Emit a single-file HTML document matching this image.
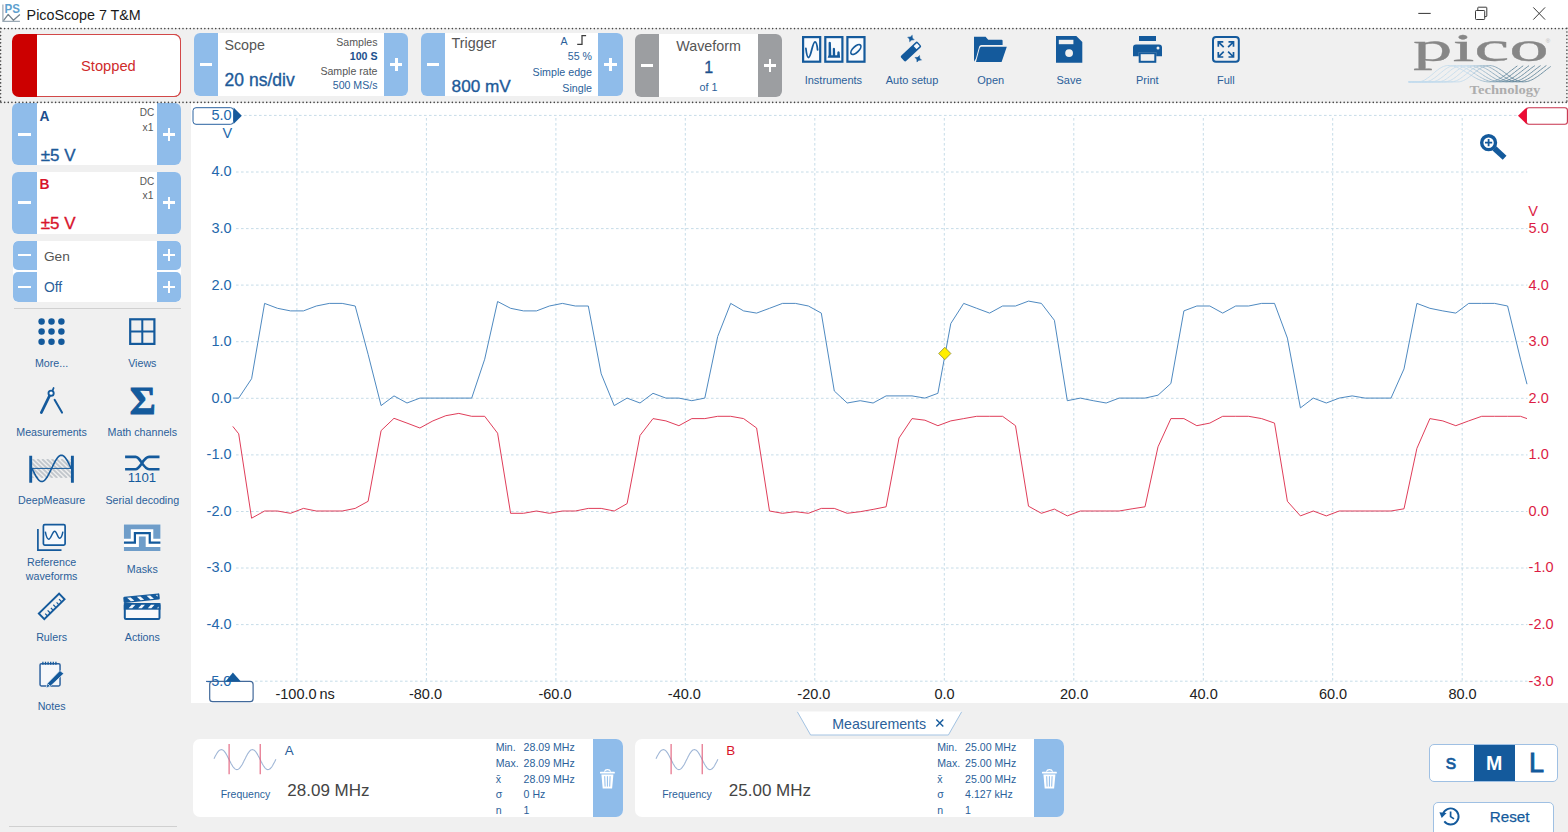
<!DOCTYPE html>
<html lang="en"><head><meta charset="utf-8"><title>PicoScope 7 T&amp;M</title>
<style>
html,body{margin:0;padding:0}
body{width:1568px;height:832px;position:relative;overflow:hidden;background:#f0f0f0;font-family:"Liberation Sans",sans-serif;}
body div,body svg{position:absolute;box-sizing:border-box}
.t{line-height:1;white-space:nowrap}
svg{overflow:visible}
svg text{font-family:"Liberation Sans",sans-serif}
</style></head><body>
<div style="left:0.0px;top:0.0px;width:1568.0px;height:29.0px;background:#fff;"></div>
<svg style="left:0.0px;top:0.0px;" width="24" height="26" viewBox="0 0 24 26"><path d="M2.9 4.6v16.8h17" fill="none" stroke="#9aa9b5" stroke-width="1.2"/><path d="M3.5 20.7l4.7-6.3l5.2 5.9l6.5-5.9" fill="none" stroke="#75848f" stroke-width="1.3" stroke-linejoin="round"/><text x="4.6" y="13.4" font-size="12.2" font-weight="700" fill="#5d9fce" textLength="15.4" lengthAdjust="spacingAndGlyphs">PS</text></svg>
<div class="t" style="left:26.6px;top:8.1px;font-size:14.3px;color:#1a1a1a;">PicoScope 7 T&amp;M</div>
<svg style="left:1410.0px;top:0.0px;" width="158" height="29" viewBox="0 0 158 29"><path d="M8.3 13.4h12.4" stroke="#333" stroke-width="1" fill="none"/><rect x="65.5" y="10.5" width="9.2" height="9" rx="0.8" fill="none" stroke="#3a3a3a" stroke-width="1"/><path d="M67.8 10.3v-2.5a0.6 0.6 0 0 1 0.6-0.6h7.8a0.6 0.6 0 0 1 0.6 0.6v8.2a0.6 0.6 0 0 1-0.6 0.6h-1.3" fill="none" stroke="#3a3a3a" stroke-width="1"/><path d="M123.3 7.4l11.8 12.2M135.1 7.4l-11.8 12.2" stroke="#3a3a3a" stroke-width="1" fill="none"/></svg>
<div style="left:0.0px;top:28.0px;width:1568.0px;height:75.0px;background:#f0f0f0;"></div>
<div style="left:12.3px;top:33.8px;width:169px;height:63.2px;background:#cc0000;border-radius:7px"></div>
<div style="left:37px;top:33.8px;width:144.3px;height:63.2px;background:#fff;border:1.3px solid #d24848;border-left:none;border-radius:0 7px 7px 0"></div>
<div class="t" style="left:108.4px;transform:translateX(-50%);top:59.1px;font-size:14.7px;color:#cf2b2b;">Stopped</div>
<div style="left:193.8px;top:32.7px;width:214.5px;height:63.4px;background:#fff;border-radius:6px;overflow:hidden"><div style="left:0;top:0;width:24.2px;height:100%;background:#8fbcea"></div><div style="right:0;top:0;width:24.2px;height:100%;background:#8fbcea"></div></div>
<div style="left:199.6px;top:63.1px;width:12.6px;height:2.8px;background:#fff;"></div>
<div style="left:389.9px;top:63.1px;width:12.6px;height:2.8px;background:#fff;"></div>
<div style="left:394.8px;top:58.2px;width:2.8px;height:12.6px;background:#fff;"></div>
<div class="t" style="left:224.4px;top:38.0px;font-size:14.3px;color:#555555;">Scope</div>
<div class="t" style="left:224.6px;top:72.1px;font-size:17.5px;color:#1d5a99;-webkit-text-stroke:0.35px #1d5a99;">20 ns/div</div>
<div class="t" style="right:1190.5px;top:37.0px;font-size:10.6px;color:#555555;">Samples</div>
<div class="t" style="right:1190.5px;top:51.0px;font-size:10.6px;color:#1d4f8d;font-weight:700;">100 S</div>
<div class="t" style="right:1190.5px;top:66.0px;font-size:10.6px;color:#555555;">Sample rate</div>
<div class="t" style="right:1190.5px;top:80.0px;font-size:10.6px;color:#2b5f9a;">500 MS/s</div>
<div style="left:421.0px;top:32.7px;width:201.7px;height:63.4px;background:#fff;border-radius:6px;overflow:hidden"><div style="left:0;top:0;width:24.3px;height:100%;background:#8fbcea"></div><div style="right:0;top:0;width:24.3px;height:100%;background:#8fbcea"></div></div>
<div style="left:426.8px;top:63.1px;width:12.6px;height:2.8px;background:#fff;"></div>
<div style="left:604.3px;top:63.1px;width:12.6px;height:2.8px;background:#fff;"></div>
<div style="left:609.2px;top:58.2px;width:2.8px;height:12.6px;background:#fff;"></div>
<div class="t" style="left:451.6px;top:36.0px;font-size:14.3px;color:#555555;">Trigger</div>
<div class="t" style="left:451.6px;top:78.0px;font-size:17.2px;color:#1d5a99;-webkit-text-stroke:0.35px #1d5a99;">800 mV</div>
<div class="t" style="left:560.4px;top:36.0px;font-size:10.6px;color:#2b5f9a;">A</div>
<svg style="left:577.0px;top:35.0px;" width="10" height="10" viewBox="0 0 10 10"><path d="M0.2 9.4h4.8v-8.8h4.1" fill="none" stroke="#3c3c3c" stroke-width="1.25"/></svg>
<div class="t" style="right:976.0px;top:51.0px;font-size:10.6px;color:#2b5f9a;">55 %</div>
<div class="t" style="right:976.0px;top:67.0px;font-size:10.7px;color:#2b5f9a;">Simple edge</div>
<div class="t" style="right:976.0px;top:83.0px;font-size:10.7px;color:#2b5f9a;">Single</div>
<div style="left:635.0px;top:33.7px;width:147.0px;height:63.3px;background:#fff;border-radius:6px;overflow:hidden"><div style="left:0;top:0;width:24.0px;height:100%;background:#9c9ea1"></div><div style="right:0;top:0;width:24.0px;height:100%;background:#9c9ea1"></div></div>
<div style="left:640.7px;top:64.0px;width:12.6px;height:2.8px;background:#fff;"></div>
<div style="left:763.7px;top:64.0px;width:12.6px;height:2.8px;background:#fff;"></div>
<div style="left:768.6px;top:59.1px;width:2.8px;height:12.6px;background:#fff;"></div>
<div class="t" style="left:708.6px;transform:translateX(-50%);top:39.0px;font-size:14.3px;color:#555555;">Waveform</div>
<div class="t" style="left:708.6px;transform:translateX(-50%);top:60.0px;font-size:16px;color:#1d4f8d;-webkit-text-stroke:0.3px #1d4f8d;">1</div>
<div class="t" style="left:708.6px;transform:translateX(-50%);top:82.0px;font-size:10.8px;color:#2b5f9a;">of 1</div>
<div class="t" style="left:833.4px;transform:translateX(-50%);top:75.0px;font-size:11px;color:#2b5f9a;">Instruments</div>
<div class="t" style="left:912.0px;transform:translateX(-50%);top:75.0px;font-size:11px;color:#2b5f9a;">Auto setup</div>
<div class="t" style="left:990.7px;transform:translateX(-50%);top:75.0px;font-size:11px;color:#2b5f9a;">Open</div>
<div class="t" style="left:1069.0px;transform:translateX(-50%);top:75.0px;font-size:11px;color:#2b5f9a;">Save</div>
<div class="t" style="left:1147.3px;transform:translateX(-50%);top:75.0px;font-size:11px;color:#2b5f9a;">Print</div>
<div class="t" style="left:1225.8px;transform:translateX(-50%);top:75.0px;font-size:11px;color:#2b5f9a;">Full</div>
<svg style="left:801.7px;top:36.0px;" width="64" height="27" viewBox="0 0 64 27"><rect x="1.1" y="1.1" width="17.1" height="24.6" fill="#f9fbfe" stroke="#145a9c" stroke-width="2.2"/><rect x="23.3" y="1.1" width="17.1" height="24.6" fill="#f9fbfe" stroke="#145a9c" stroke-width="2.2"/><rect x="45.4" y="1.1" width="17.1" height="24.6" fill="#f9fbfe" stroke="#145a9c" stroke-width="2.2"/><path d="M3.9 12.5C4.5 18 5.5 21.5 6.6 21.5C9 21.5 10.5 5.9 13 5.9C14.5 5.9 15.2 10 15.6 13.9" fill="none" stroke="#145a9c" stroke-width="1.8" stroke-linecap="round"/><path d="M25.7 21.7L26.6 19V6.5Q27.75 4.8 28.9 6.5L29.3 19.3L30.8 19.3V12.5Q31.9 11 33 12.5L33.2 19.3L35.2 19.3L35.4 16Q36.5 14.5 37.6 16L38.1 21.7Z" fill="#145a9c"/><ellipse cx="53.9" cy="13.5" rx="6.4" ry="2.9" transform="rotate(-44 53.9 13.5)" fill="none" stroke="#145a9c" stroke-width="1.7"/></svg>
<svg style="left:900.0px;top:35.3px;" width="23" height="28" viewBox="0 0 23 28"><g transform="rotate(-43 10.95 16.5)"><rect x="-0.45" y="12.8" width="22.8" height="7.4" rx="1.7" fill="#145a9c"/><rect x="16.6" y="14.4" width="4.4" height="4.2" rx="0.5" fill="#f4f8fc"/></g><path d="M0 -3.5Q0.5 -0.5 3.5 0Q0.5 0.5 0 3.5Q-0.5 0.5 -3.5 0Q-0.5 -0.5 0 -3.5Z" fill="#145a9c" stroke="#145a9c" stroke-width="0.5" transform="translate(10.95 3.5) rotate(22)"/><path d="M0 -3.5Q0.5 -0.5 3.5 0Q0.5 0.5 0 3.5Q-0.5 0.5 -3.5 0Q-0.5 -0.5 0 -3.5Z" fill="#145a9c" stroke="#145a9c" stroke-width="0.5" transform="translate(18.25 23.8) rotate(22)"/></svg>
<svg style="left:974.0px;top:36.0px;" width="33" height="27" viewBox="0 0 33 27"><path d="M0 0.8h11.6l2.6 3h13.4a1 1 0 0 1 1 1v4.3h-21.2a2.4 2.4 0 0 0 -2.3 1.7l-3.2 11.8l-1.9 3.2z" fill="#145a9c"/><path d="M7.4 10.7h25.4l-5.2 15.3h-25.6l3.6 -13.6a2.3 2.3 0 0 1 1.8 -1.7z" fill="#145a9c"/></svg>
<svg style="left:1055.7px;top:36.0px;" width="27" height="27" viewBox="0 0 27 27"><path d="M0 0h20.3l6 6v20.8h-26.3z" fill="#145a9c"/><rect x="2.8" y="3.8" width="14.6" height="4.4" fill="#f0f0f0"/><circle cx="13.1" cy="17.1" r="3.9" fill="#f0f0f0"/></svg>
<svg style="left:1132.7px;top:36.0px;" width="29" height="27" viewBox="0 0 29 27"><rect x="6" y="0" width="17" height="5" fill="#145a9c"/><path d="M3 8.6h23a3 3 0 0 1 3 3v8.6h-5.8v-4h-17.4v4h-5.8v-8.6a3 3 0 0 1 3-3z" fill="#145a9c"/><circle cx="25" cy="11.9" r="1.5" fill="#f0f0f0"/><rect x="6.7" y="17.2" width="15.6" height="8.6" fill="none" stroke="#145a9c" stroke-width="2"/></svg>
<svg style="left:1212.0px;top:36.0px;" width="28" height="27" viewBox="0 0 28 27"><rect x="1" y="1" width="25.8" height="24.8" rx="3" fill="none" stroke="#145a9c" stroke-width="2"/><path d="M11.7 11.2L6.300000000000001 5.800000000000001M11.3 5.800000000000001L6.300000000000001 5.800000000000001L6.300000000000001 10.8" fill="none" stroke="#145a9c" stroke-width="1.7"/><path d="M16.1 11.2L21.5 5.800000000000001M16.5 5.800000000000001L21.5 5.800000000000001L21.5 10.8" fill="none" stroke="#145a9c" stroke-width="1.7"/><path d="M11.7 15.600000000000001L6.300000000000001 21.0M11.3 21.0L6.300000000000001 21.0L6.300000000000001 16.0" fill="none" stroke="#145a9c" stroke-width="1.7"/><path d="M16.1 15.600000000000001L21.5 21.0M16.5 21.0L21.5 21.0L21.5 16.0" fill="none" stroke="#145a9c" stroke-width="1.7"/></svg>
<svg style="left:1412.0px;top:28.0px;" width="150" height="70" viewBox="0 0 150 70"><defs><linearGradient id="wg" gradientUnits="userSpaceOnUse" x1="55" y1="0" x2="98" y2="0"><stop offset="0" stop-color="#c3dbec"/><stop offset="1" stop-color="#5b8197"/></linearGradient></defs><polyline points="-3.4,53.9 -1.9,53.9 -0.5,53.9 0.9,53.9 2.4,53.9 3.8,53.9 5.3,53.9 6.8,53.9 8.2,53.7 9.6,53.3 11.1,52.8 12.5,52.1 14.0,51.2 15.4,50.2 16.9,49.2 18.3,48.0 19.8,46.8 21.2,45.6 22.7,44.3 24.1,43.1 25.6,42.0 27.0,40.9 28.5,40.0 29.9,39.2 31.4,38.5 32.8,38.0 34.3,37.7 35.7,37.5 37.2,37.5 38.6,37.6 40.1,37.9 41.6,38.2 43.0,38.6 44.5,39.1 45.9,39.7 47.4,40.4 48.8,41.1 50.3,41.9 51.7,42.7 53.2,43.6 54.6,44.5 56.1,45.4 57.5,46.3 59.0,47.2 60.4,48.1 61.9,49.0 63.3,49.8 64.8,50.6 66.2,51.3 67.7,51.9 69.1,52.5 70.6,52.9 72.0,53.3 73.5,53.6 74.9,53.8 76.4,53.9 77.8,53.9 79.3,53.7 80.7,53.5 82.2,53.1 83.6,52.6 85.1,52.0 86.5,51.3 88.0,50.6 89.4,49.7 90.9,48.7 92.3,47.7 93.8,46.7 95.2,45.6 96.7,44.5 98.1,43.3 99.6,42.2 101.0,41.1 102.5,40.0 103.9,38.9 105.4,37.9" fill="none" stroke="url(#wg)" stroke-width="0.85"/><polyline points="-3.4,53.9 -1.9,53.9 -0.5,53.9 0.9,53.9 2.4,53.9 3.8,53.9 5.3,53.9 6.8,53.9 8.2,53.9 9.6,53.9 11.1,53.9 12.5,53.9 14.0,53.8 15.4,53.5 16.9,53.1 18.3,52.5 19.8,51.7 21.2,50.8 22.7,49.8 24.1,48.7 25.6,47.5 27.0,46.3 28.5,45.1 29.9,43.9 31.4,42.7 32.8,41.6 34.3,40.6 35.7,39.7 37.2,38.9 38.6,38.3 40.1,37.9 41.6,37.6 43.0,37.5 44.5,37.6 45.9,37.7 47.4,38.0 48.8,38.4 50.3,38.8 51.7,39.4 53.2,40.0 54.6,40.7 56.1,41.5 57.5,42.4 59.0,43.2 60.4,44.1 61.9,45.1 63.3,46.0 64.8,47.0 66.2,47.9 67.7,48.8 69.1,49.6 70.6,50.4 72.0,51.2 73.5,51.8 74.9,52.4 76.4,52.9 77.8,53.3 79.3,53.6 80.7,53.8 82.2,53.9 83.6,53.9 85.1,53.7 86.5,53.5 88.0,53.1 89.4,52.6 90.9,52.0 92.3,51.3 93.8,50.5 95.2,49.6 96.7,48.7 98.1,47.7 99.6,46.6 101.0,45.5 102.5,44.4 103.9,43.2 105.4,42.1 106.8,41.0 108.3,39.9 109.7,38.8 111.2,37.8" fill="none" stroke="url(#wg)" stroke-width="0.85"/><polyline points="-3.4,53.9 -1.9,53.9 -0.5,53.9 0.9,53.9 2.4,53.9 3.8,53.9 5.3,53.9 6.8,53.9 8.2,53.9 9.6,53.9 11.1,53.9 12.5,53.9 14.0,53.9 15.4,53.9 16.9,53.9 18.3,53.9 19.8,53.9 21.2,53.7 22.7,53.4 24.1,52.9 25.6,52.2 27.0,51.4 28.5,50.4 29.9,49.4 31.4,48.3 32.8,47.1 34.3,45.9 35.7,44.6 37.2,43.4 38.6,42.3 40.1,41.2 41.6,40.3 43.0,39.4 44.5,38.7 45.9,38.1 47.4,37.8 48.8,37.5 50.3,37.5 51.7,37.6 53.2,37.8 54.6,38.1 56.1,38.6 57.5,39.1 59.0,39.7 60.4,40.4 61.9,41.2 63.3,42.0 64.8,42.9 66.2,43.8 67.7,44.8 69.1,45.7 70.6,46.7 72.0,47.7 73.5,48.6 74.9,49.5 76.4,50.3 77.8,51.1 79.3,51.8 80.7,52.4 82.2,52.9 83.6,53.3 85.1,53.6 86.5,53.8 88.0,53.9 89.4,53.9 90.9,53.7 92.3,53.4 93.8,53.1 95.2,52.6 96.7,52.0 98.1,51.2 99.6,50.5 101.0,49.6 102.5,48.6 103.9,47.6 105.4,46.5 106.8,45.4 108.3,44.3 109.7,43.2 111.2,42.0 112.6,40.9 114.1,39.8 115.5,38.7 117.0,37.7" fill="none" stroke="url(#wg)" stroke-width="0.85"/><polyline points="-3.4,53.9 -1.9,53.9 -0.5,53.9 0.9,53.9 2.4,53.9 3.8,53.9 5.3,53.9 6.8,53.9 8.2,53.9 9.6,53.9 11.1,53.9 12.5,53.9 14.0,53.9 15.4,53.9 16.9,53.9 18.3,53.9 19.8,53.9 21.2,53.9 22.7,53.9 24.1,53.9 25.6,53.9 27.0,53.8 28.5,53.6 29.9,53.2 31.4,52.6 32.8,51.9 34.3,51.0 35.7,50.0 37.2,48.9 38.6,47.8 40.1,46.6 41.6,45.4 43.0,44.2 44.5,43.0 45.9,41.9 47.4,40.9 48.8,39.9 50.3,39.1 51.7,38.5 53.2,38.0 54.6,37.7 56.1,37.5 57.5,37.5 59.0,37.7 60.4,37.9 61.9,38.3 63.3,38.8 64.8,39.4 66.2,40.0 67.7,40.8 69.1,41.6 70.6,42.5 72.0,43.5 73.5,44.4 74.9,45.4 76.4,46.4 77.8,47.4 79.3,48.4 80.7,49.3 82.2,50.1 83.6,51.0 85.1,51.7 86.5,52.3 88.0,52.9 89.4,53.3 90.9,53.6 92.3,53.8 93.8,53.9 95.2,53.9 96.7,53.7 98.1,53.4 99.6,53.0 101.0,52.5 102.5,51.9 103.9,51.2 105.4,50.4 106.8,49.5 108.3,48.6 109.7,47.5 111.2,46.5 112.6,45.4 114.1,44.2 115.5,43.1 117.0,42.0 118.4,40.8 119.9,39.7 121.3,38.7 122.8,37.7" fill="none" stroke="url(#wg)" stroke-width="0.85"/><polyline points="-3.4,53.9 -1.9,53.9 -0.5,53.9 0.9,53.9 2.4,53.9 3.8,53.9 5.3,53.9 6.8,53.9 8.2,53.9 9.6,53.9 11.1,53.9 12.5,53.9 14.0,53.9 15.4,53.9 16.9,53.9 18.3,53.9 19.8,53.9 21.2,53.9 22.7,53.9 24.1,53.9 25.6,53.9 27.0,53.9 28.5,53.9 29.9,53.9 31.4,53.9 32.8,53.9 34.3,53.7 35.7,53.4 37.2,52.9 38.6,52.3 40.1,51.5 41.6,50.6 43.0,49.6 44.5,48.5 45.9,47.3 47.4,46.1 48.8,44.9 50.3,43.7 51.7,42.6 53.2,41.5 54.6,40.5 56.1,39.6 57.5,38.9 59.0,38.3 60.4,37.9 61.9,37.6 63.3,37.5 64.8,37.6 66.2,37.8 67.7,38.1 69.1,38.5 70.6,39.0 72.0,39.7 73.5,40.4 74.9,41.3 76.4,42.1 77.8,43.1 79.3,44.1 80.7,45.1 82.2,46.1 83.6,47.1 85.1,48.1 86.5,49.1 88.0,50.0 89.4,50.8 90.9,51.6 92.3,52.3 93.8,52.8 95.2,53.3 96.7,53.6 98.1,53.8 99.6,53.9 101.0,53.9 102.5,53.7 103.9,53.4 105.4,53.0 106.8,52.5 108.3,51.9 109.7,51.2 111.2,50.3 112.6,49.5 114.1,48.5 115.5,47.5 117.0,46.4 118.4,45.3 119.9,44.2 121.3,43.0 122.8,41.9 124.2,40.8 125.7,39.7 127.1,38.6 128.6,37.6" fill="none" stroke="url(#wg)" stroke-width="0.85"/><polyline points="-3.4,53.9 -1.9,53.9 -0.5,53.9 0.9,53.9 2.4,53.9 3.8,53.9 5.3,53.9 6.8,53.9 8.2,53.9 9.6,53.9 11.1,53.9 12.5,53.9 14.0,53.9 15.4,53.9 16.9,53.9 18.3,53.9 19.8,53.9 21.2,53.9 22.7,53.9 24.1,53.9 25.6,53.9 27.0,53.9 28.5,53.9 29.9,53.9 31.4,53.9 32.8,53.9 34.3,53.9 35.7,53.9 37.2,53.9 38.6,53.9 40.1,53.8 41.6,53.6 43.0,53.2 44.5,52.7 45.9,52.0 47.4,51.2 48.8,50.2 50.3,49.2 51.7,48.0 53.2,46.9 54.6,45.7 56.1,44.5 57.5,43.3 59.0,42.2 60.4,41.1 61.9,40.2 63.3,39.4 64.8,38.7 66.2,38.1 67.7,37.7 69.1,37.5 70.6,37.5 72.0,37.6 73.5,37.9 74.9,38.2 76.4,38.7 77.8,39.3 79.3,40.1 80.7,40.9 82.2,41.8 83.6,42.7 85.1,43.7 86.5,44.8 88.0,45.8 89.4,46.9 90.9,47.9 92.3,48.9 93.8,49.8 95.2,50.7 96.7,51.5 98.1,52.2 99.6,52.8 101.0,53.3 102.5,53.6 103.9,53.8 105.4,53.9 106.8,53.9 108.3,53.7 109.7,53.4 111.2,53.0 112.6,52.5 114.1,51.8 115.5,51.1 117.0,50.3 118.4,49.4 119.9,48.4 121.3,47.4 122.8,46.3 124.2,45.2 125.7,44.1 127.1,42.9 128.6,41.8 130.0,40.7 131.5,39.6 132.9,38.5 134.4,37.5" fill="none" stroke="url(#wg)" stroke-width="0.85"/><polyline points="-3.4,53.9 -1.9,53.9 -0.5,53.9 0.9,53.9 2.4,53.9 3.8,53.9 5.3,53.9 6.8,53.9 8.2,53.9 9.6,53.9 11.1,53.9 12.5,53.9 14.0,53.9 15.4,53.9 16.9,53.9 18.3,53.9 19.8,53.9 21.2,53.9 22.7,53.9 24.1,53.9 25.6,53.9 27.0,53.9 28.5,53.9 29.9,53.9 31.4,53.9 32.8,53.9 34.3,53.9 35.7,53.9 37.2,53.9 38.6,53.9 40.1,53.9 41.6,53.9 43.0,53.9 44.5,53.9 45.9,53.9 47.4,53.8 48.8,53.5 50.3,53.0 51.7,52.4 53.2,51.7 54.6,50.8 56.1,49.8 57.5,48.7 59.0,47.6 60.4,46.4 61.9,45.2 63.3,44.0 64.8,42.9 66.2,41.8 67.7,40.8 69.1,39.9 70.6,39.1 72.0,38.5 73.5,38.0 74.9,37.7 76.4,37.5 77.8,37.5 79.3,37.7 80.7,38.0 82.2,38.4 83.6,39.0 85.1,39.7 86.5,40.5 88.0,41.4 89.4,42.3 90.9,43.3 92.3,44.4 93.8,45.5 95.2,46.6 96.7,47.6 98.1,48.7 99.6,49.7 101.0,50.6 102.5,51.4 103.9,52.1 105.4,52.7 106.8,53.2 108.3,53.6 109.7,53.8 111.2,53.9 112.6,53.8 114.1,53.7 115.5,53.4 117.0,53.0 118.4,52.4 119.9,51.8 121.3,51.1 122.8,50.2 124.2,49.3 125.7,48.4 127.1,47.3 128.6,46.3 130.0,45.2 131.5,44.0 132.9,42.9 134.4,41.7 135.8,40.6 137.3,39.5 138.7,38.5" fill="none" stroke="url(#wg)" stroke-width="0.85"/><text x="1" y="32.7" font-size="40" fill="#878787" stroke="#878787" stroke-width="0.3" textLength="135.8" lengthAdjust="spacingAndGlyphs" style="font-family:'Liberation Serif',serif">pico</text><text x="133.8" y="15.3" font-size="6" fill="#b8b8b8">®</text><text x="57.6" y="65.9" font-size="12" fill="#adadad" font-weight="700" textLength="70.8" lengthAdjust="spacingAndGlyphs" style="font-family:'Liberation Serif',serif">Technology</text></svg>
<div style="left:12.1px;top:103.4px;width:169.2px;height:61.6px;background:#fff;border-radius:6px;overflow:hidden"><div style="left:0;top:0;width:24.5px;height:100%;background:#8fbcea"></div><div style="right:0;top:0;width:24.5px;height:100%;background:#8fbcea"></div></div>
<div style="left:18.1px;top:132.9px;width:12.6px;height:2.8px;background:#fff;"></div>
<div style="left:162.8px;top:132.9px;width:12.6px;height:2.8px;background:#fff;"></div>
<div style="left:167.7px;top:128.0px;width:2.8px;height:12.6px;background:#fff;"></div>
<div class="t" style="left:39.6px;top:110.0px;font-size:13.8px;color:#1d4f8d;font-weight:700;">A</div>
<div class="t" style="left:40.7px;top:147.0px;font-size:17px;color:#1d5a99;-webkit-text-stroke:0.35px #1d5a99;">±5 V</div>
<div class="t" style="right:1413.8px;top:108.0px;font-size:10px;color:#555555;">DC</div>
<div class="t" style="right:1414.5px;top:123.1px;font-size:10.3px;color:#555555;">x1</div>
<div style="left:12.1px;top:172.0px;width:169.2px;height:61.5px;background:#fff;border-radius:6px;overflow:hidden"><div style="left:0;top:0;width:24.5px;height:100%;background:#8fbcea"></div><div style="right:0;top:0;width:24.5px;height:100%;background:#8fbcea"></div></div>
<div style="left:18.1px;top:201.4px;width:12.6px;height:2.8px;background:#fff;"></div>
<div style="left:162.8px;top:201.4px;width:12.6px;height:2.8px;background:#fff;"></div>
<div style="left:167.7px;top:196.5px;width:2.8px;height:12.6px;background:#fff;"></div>
<div class="t" style="left:39.6px;top:178.0px;font-size:13.8px;color:#d8142c;font-weight:700;">B</div>
<div class="t" style="left:40.7px;top:215.0px;font-size:17px;color:#d8142c;-webkit-text-stroke:0.35px #d8142c;">±5 V</div>
<div class="t" style="right:1413.8px;top:177.0px;font-size:10px;color:#555555;">DC</div>
<div class="t" style="right:1414.5px;top:191.1px;font-size:10.3px;color:#555555;">x1</div>
<div style="left:12.5px;top:240.5px;width:168.5px;height:61.5px;background:#fff;border-radius:5px;overflow:hidden"><div style="left:0;top:0;width:24.6px;height:29.4px;background:#8fbcea;border-radius:5px 0 0 5px"></div><div style="right:0;top:0;width:24.3px;height:29.4px;background:#8fbcea;border-radius:0 5px 5px 0"></div><div style="left:0;top:31.7px;width:24.6px;height:29.8px;background:#8fbcea;border-radius:5px 0 0 5px"></div><div style="right:0;top:31.7px;width:24.3px;height:29.8px;background:#8fbcea;border-radius:0 5px 5px 0"></div></div>
<div style="left:18.4px;top:254.0px;width:12.6px;height:2.4px;background:#fff;"></div>
<div style="left:162.5px;top:254.0px;width:12.6px;height:2.4px;background:#fff;"></div>
<div style="left:167.6px;top:248.9px;width:2.4px;height:12.6px;background:#fff;"></div>
<div style="left:18.4px;top:285.9px;width:12.6px;height:2.4px;background:#fff;"></div>
<div style="left:162.5px;top:285.9px;width:12.6px;height:2.4px;background:#fff;"></div>
<div style="left:167.6px;top:280.8px;width:2.4px;height:12.6px;background:#fff;"></div>
<div class="t" style="left:43.9px;top:250.0px;font-size:13.7px;color:#555555;">Gen</div>
<div class="t" style="left:43.9px;top:281.0px;font-size:13.9px;color:#2b5f9a;">Off</div>
<div style="left:14.0px;top:308.0px;width:167.0px;height:1.3px;background:#d0d0d0;"></div>
<div style="left:9.0px;top:825.9px;width:168.0px;height:1.2px;background:#d0d0d0;"></div>
<div class="t" style="left:51.6px;transform:translateX(-50%);top:358.1px;font-size:10.7px;color:#2b5f9a;">More...</div>
<div class="t" style="left:142.3px;transform:translateX(-50%);top:358.1px;font-size:10.7px;color:#2b5f9a;">Views</div>
<div class="t" style="left:51.6px;transform:translateX(-50%);top:427.1px;font-size:10.7px;color:#2b5f9a;">Measurements</div>
<div class="t" style="left:142.3px;transform:translateX(-50%);top:427.1px;font-size:10.7px;color:#2b5f9a;">Math channels</div>
<div class="t" style="left:51.6px;transform:translateX(-50%);top:495.1px;font-size:10.7px;color:#2b5f9a;">DeepMeasure</div>
<div class="t" style="left:142.3px;transform:translateX(-50%);top:495.1px;font-size:10.7px;color:#2b5f9a;">Serial decoding</div>
<div class="t" style="left:51.6px;transform:translateX(-50%);top:557.1px;font-size:10.7px;color:#2b5f9a;">Reference</div>
<div class="t" style="left:51.6px;transform:translateX(-50%);top:571.1px;font-size:10.7px;color:#2b5f9a;">waveforms</div>
<div class="t" style="left:142.3px;transform:translateX(-50%);top:564.1px;font-size:10.7px;color:#2b5f9a;">Masks</div>
<div class="t" style="left:51.6px;transform:translateX(-50%);top:632.1px;font-size:10.7px;color:#2b5f9a;">Rulers</div>
<div class="t" style="left:142.3px;transform:translateX(-50%);top:632.1px;font-size:10.7px;color:#2b5f9a;">Actions</div>
<div class="t" style="left:51.6px;transform:translateX(-50%);top:701.1px;font-size:10.7px;color:#2b5f9a;">Notes</div>
<svg style="left:0.0px;top:0.0px;" width="192" height="832" viewBox="0 0 192 832"><circle cx="41.6" cy="321.5" r="3.25" fill="#145a9c"/><circle cx="41.6" cy="331.6" r="3.25" fill="#145a9c"/><circle cx="41.6" cy="341.7" r="3.25" fill="#145a9c"/><circle cx="51.5" cy="321.5" r="3.25" fill="#145a9c"/><circle cx="51.5" cy="331.6" r="3.25" fill="#145a9c"/><circle cx="51.5" cy="341.7" r="3.25" fill="#145a9c"/><circle cx="61.4" cy="321.5" r="3.25" fill="#145a9c"/><circle cx="61.4" cy="331.6" r="3.25" fill="#145a9c"/><circle cx="61.4" cy="341.7" r="3.25" fill="#145a9c"/><rect x="130.2" y="319.3" width="24.2" height="24.6" fill="none" stroke="#145a9c" stroke-width="2.2"/><path d="M142.3 319.3v24.6M130.2 331.6h24.2" stroke="#145a9c" stroke-width="2" fill="none"/><path d="M49.6 395.6L41.3 412.6" stroke="#145a9c" stroke-width="2.7" stroke-linecap="round" fill="none"/><path d="M54.6 399.8L62 412.6" stroke="#145a9c" stroke-width="2" stroke-linecap="round" fill="none"/><path d="M52 392L53.6 388" stroke="#145a9c" stroke-width="1.8" stroke-linecap="round" fill="none"/><circle cx="51.1" cy="393.2" r="2.6" fill="#fff" stroke="#145a9c" stroke-width="1.9"/><text x="142.6" y="413.9" font-size="39.5" font-weight="700" text-anchor="middle" fill="#145a9c" stroke="#145a9c" stroke-width="1.1" style="font-family:'Liberation Serif','DejaVu Serif',serif" id="sigma">Σ</text><clipPath id="dmc"><rect x="32.2" y="459" width="39" height="19"/></clipPath><path d="M8.5 459L28.5 478M13.3 459L33.3 478M18.1 459L38.1 478M22.9 459L42.9 478M27.7 459L47.7 478M32.5 459L52.5 478M37.3 459L57.3 478M42.1 459L62.1 478M46.9 459L66.9 478M51.7 459L71.7 478M56.5 459L76.5 478M61.3 459L81.3 478M66.1 459L86.1 478M70.9 459L90.9 478M75.7 459L95.7 478" stroke="#c3c8cd" stroke-width="1.9" fill="none" clip-path="url(#dmc)"/><path d="M30.7 455.7v27M72.4 455.7v27" stroke="#145a9c" stroke-width="2.9" fill="none"/><path d="M31 468.4h41" stroke="#145a9c" stroke-width="1" fill="none"/><polyline points="32.0,468.4 32.7,469.8 33.3,471.1 34.0,472.4 34.6,473.7 35.3,474.9 35.9,476.1 36.6,477.2 37.2,478.1 37.9,479.0 38.5,479.7 39.2,480.4 39.8,480.9 40.5,481.2 41.1,481.4 41.8,481.5 42.5,481.4 43.1,481.2 43.8,480.9 44.4,480.4 45.1,479.7 45.7,479.0 46.4,478.1 47.0,477.2 47.7,476.1 48.3,474.9 49.0,473.7 49.6,472.4 50.3,471.1 50.9,469.8 51.6,468.4 52.3,467.0 52.9,465.7 53.6,464.4 54.2,463.1 54.9,461.8 55.5,460.7 56.2,459.6 56.8,458.7 57.5,457.8 58.1,457.1 58.8,456.4 59.4,455.9 60.1,455.6 60.7,455.4 61.4,455.3 62.1,455.4 62.7,455.6 63.4,455.9 64.0,456.4 64.7,457.1 65.3,457.8 66.0,458.7 66.6,459.6 67.3,460.7 67.9,461.8 68.6,463.1 69.2,464.4 69.9,465.7 70.5,467.0 71.2,468.4" stroke="#145a9c" stroke-width="1.6" fill="none"/><path d="M125.1 456.9h10.5c5 0 7.5 12.3 13.5 12.3h10.4M125.1 469.2h10.5c5 0 7.5 -12.3 13.5 -12.3h10.4" stroke="#145a9c" stroke-width="2.6" fill="none"/><text x="142" y="482" font-size="12.6" text-anchor="middle" fill="#145a9c" textLength="28.4" lengthAdjust="spacingAndGlyphs">1101</text><rect x="43.4" y="524.7" width="21.7" height="20.4" rx="1.3" fill="#f6f9fc" stroke="#145a9c" stroke-width="1.7"/><path d="M37.9 529V550.1H61.5" stroke="#145a9c" stroke-width="1.7" fill="none"/><path d="M45.3 531.7C46 535.5 47.3 539.2 48.7 539.2C51 539.2 52.4 531.2 54.7 531.2C56.8 531.2 57.6 538.3 59.7 538.3C61.2 538.3 62.3 535 62.9 531.7" stroke="#145a9c" stroke-width="1.5" fill="none"/><rect x="123.95" y="524.5" width="36.45" height="26.5" fill="#fff"/><path d="M123.95 524.5h36.45v14.3h-7.1v-9.5h-22.5v9.5h-6.85z" fill="#6f9dc9"/><path d="M123.95 546.9h14.95v-10.3h6.8v10.3h14.7v4.1h-36.45z" fill="#6f9dc9"/><path d="M123.95 542.6h10.95v-9.5h14.85v9.5h10.65" stroke="#145a9c" stroke-width="2.2" fill="none"/><g transform="rotate(-44.5 51.7 606.4)"><rect x="37.5" y="602.5" width="28.4" height="7.8" fill="none" stroke="#145a9c" stroke-width="1.9"/><path d="M42 610v-3M46 610v-3.6M50 610v-3M54 610v-3.6M58 610v-3M62 610v-3.6" stroke="#145a9c" stroke-width="1.2" fill="none"/></g><rect x="124.8" y="604.1" width="34.7" height="14.9" rx="1.2" fill="#f7f9fb" stroke="#145a9c" stroke-width="2"/><rect x="123.8" y="603.1" width="36.7" height="6.6" fill="#145a9c"/><path d="M128.6 608.3l3.2 -3.6h3.6l-3.2 3.6zM138.2 608.3l3.2 -3.6h3.6l-3.2 3.6zM147.8 608.3l3.2 -3.6h3.6l-3.2 3.6zM157 608.3l1.6 -1.8v1.8z" fill="#f2f6fa"/><g transform="rotate(-5.8 123.8 603.1)"><rect x="123.8" y="596.9" width="36.3" height="6.2" rx="1.2" fill="#145a9c"/><path d="M127.6 598.2h3.6l3.4 3.7h-3.6zM137.4 598.2h3.6l3.4 3.7h-3.6zM147.2 598.2h3.6l3.4 3.7h-3.6zM156.4 598.2h1.8v1.9z" fill="#f2f6fa"/></g><rect x="40.05" y="663.7" width="20" height="22.2" rx="1.3" fill="#f5f7fa" stroke="#2f639f" stroke-width="1.5"/><path d="M42.9 661.8v3M45.5 661.8v3M48.1 661.8v3M50.7 661.8v3M53.3 661.8v3M55.9 661.8v3" stroke="#145a9c" stroke-width="1.3" fill="none"/><path d="M59.9 670.6l3.9 3l-13.4 12.6l-4.3 1.7l1.2 -4.5z" fill="#145a9c" stroke="#f0f4f8" stroke-width="0.7" stroke-linejoin="round"/><path d="M47.6 683.7l2.6 2.4" stroke="#e8f0f8" stroke-width="0.8" fill="none"/></svg>
<div style="left:191.4px;top:103.4px;width:1376.6px;height:599.3px;background:#fff;"></div>
<svg style="left:0.0px;top:0.0px;" width="1568" height="832" viewBox="0 0 1568 832"><path d="M1 28.6H1567M1 102.4H1567" stroke="#444" stroke-width="1.6" stroke-dasharray="0 3.64" stroke-linecap="round" fill="none"/><path d="M0.6 28.3V102.3M1566.9 28.3V102.3" stroke="#444" stroke-width="1.6" stroke-dasharray="0 3.64" stroke-linecap="round" fill="none"/><path d="M244 115.4H1518" stroke="#c6dce8" stroke-width="1" stroke-dasharray="2.6 2.4" fill="none"/><path d="M236 172.0H1527.5" stroke="#c6dce8" stroke-width="1" stroke-dasharray="2.6 2.4" fill="none"/><path d="M236 228.6H1527.5" stroke="#c6dce8" stroke-width="1" stroke-dasharray="2.6 2.4" fill="none"/><path d="M236 285.1H1527.5" stroke="#c6dce8" stroke-width="1" stroke-dasharray="2.6 2.4" fill="none"/><path d="M236 341.7H1527.5" stroke="#c6dce8" stroke-width="1" stroke-dasharray="2.6 2.4" fill="none"/><path d="M236 398.3H1527.5" stroke="#c6dce8" stroke-width="1" stroke-dasharray="2.6 2.4" fill="none"/><path d="M236 454.9H1527.5" stroke="#c6dce8" stroke-width="1" stroke-dasharray="2.6 2.4" fill="none"/><path d="M236 511.5H1527.5" stroke="#c6dce8" stroke-width="1" stroke-dasharray="2.6 2.4" fill="none"/><path d="M236 568.0H1527.5" stroke="#c6dce8" stroke-width="1" stroke-dasharray="2.6 2.4" fill="none"/><path d="M236 624.6H1527.5" stroke="#c6dce8" stroke-width="1" stroke-dasharray="2.6 2.4" fill="none"/><path d="M255 681.2H1527.5" stroke="#c6dce8" stroke-width="1" stroke-dasharray="2.6 2.4" fill="none"/><path d="M296.9 118V681" stroke="#c6dce8" stroke-width="1" stroke-dasharray="2.6 2.4" fill="none"/><path d="M426.4 118V681" stroke="#c6dce8" stroke-width="1" stroke-dasharray="2.6 2.4" fill="none"/><path d="M555.9 118V681" stroke="#c6dce8" stroke-width="1" stroke-dasharray="2.6 2.4" fill="none"/><path d="M685.3 118V681" stroke="#c6dce8" stroke-width="1" stroke-dasharray="2.6 2.4" fill="none"/><path d="M814.8 118V681" stroke="#c6dce8" stroke-width="1" stroke-dasharray="2.6 2.4" fill="none"/><path d="M944.3 118V681" stroke="#c6dce8" stroke-width="1" stroke-dasharray="2.6 2.4" fill="none"/><path d="M1073.8 118V681" stroke="#c6dce8" stroke-width="1" stroke-dasharray="2.6 2.4" fill="none"/><path d="M1203.3 118V681" stroke="#c6dce8" stroke-width="1" stroke-dasharray="2.6 2.4" fill="none"/><path d="M1332.7 118V681" stroke="#c6dce8" stroke-width="1" stroke-dasharray="2.6 2.4" fill="none"/><path d="M1462.2 118V681" stroke="#c6dce8" stroke-width="1" stroke-dasharray="2.6 2.4" fill="none"/><polyline points="232.8,398.1 238.7,398.1 251.6,378.7 264.6,303.4 277.5,308.3 290.5,310.9 303.4,310.9 316.3,306.0 329.3,303.4 342.2,303.4 355.2,306.0 368.1,354.3 381.1,405.6 394.0,395.9 407.0,403.0 419.9,398.1 432.9,398.1 445.8,398.1 458.8,398.1 471.7,398.1 484.7,359.2 497.6,301.5 510.6,308.3 523.5,310.9 536.5,310.9 549.4,306.0 562.4,303.4 575.3,306.0 588.3,306.0 601.2,373.8 614.2,405.6 627.1,398.1 640.0,403.0 653.0,393.3 665.9,398.1 678.9,398.1 691.8,400.7 704.8,398.1 717.7,336.5 730.7,303.4 743.6,310.9 756.6,313.1 769.5,308.3 782.5,303.4 795.4,303.4 808.4,306.0 821.3,313.1 834.3,391.0 847.2,403.0 860.2,400.7 873.1,403.0 886.1,395.9 899.0,395.9 912.0,395.9 924.9,398.1 937.9,393.3 950.8,323.5 963.7,303.4 976.7,308.3 989.6,313.1 1002.6,306.0 1015.5,306.0 1028.5,301.1 1041.4,303.4 1054.4,320.3 1067.3,400.7 1080.3,398.1 1093.2,400.7 1106.2,403.0 1119.1,398.1 1132.1,398.1 1145.0,398.1 1158.0,395.2 1170.9,383.5 1183.9,310.9 1196.8,306.0 1209.8,306.0 1222.7,313.1 1235.7,306.0 1248.6,306.0 1261.6,303.4 1274.5,303.4 1287.4,338.1 1300.4,407.9 1313.3,398.1 1326.3,403.0 1339.2,398.1 1352.2,395.9 1365.1,398.1 1378.1,398.1 1391.0,398.1 1404.0,368.9 1416.9,303.4 1429.9,308.3 1442.8,310.9 1455.8,313.1 1468.7,303.4 1481.7,303.4 1494.6,303.4 1507.6,306.0 1520.5,359.2 1527.0,384.2" fill="none" stroke="#4583bd" stroke-width="0.95" stroke-linejoin="round"/><polyline points="232.8,426.4 238.7,433.8 251.6,518.2 264.6,511.0 277.5,511.0 290.5,513.3 303.4,508.4 316.3,511.0 329.3,511.0 342.2,511.0 355.2,508.4 368.1,501.3 381.1,430.6 394.0,418.3 407.0,423.1 419.9,428.0 432.9,420.9 445.8,415.7 458.8,413.4 471.7,416.3 484.7,416.3 497.6,433.2 510.6,513.3 523.5,513.3 536.5,511.0 549.4,513.3 562.4,511.0 575.3,511.0 588.3,508.4 601.2,508.4 614.2,511.0 627.1,503.6 640.0,435.5 653.0,418.6 665.9,420.9 678.9,425.7 691.8,418.6 704.8,418.6 717.7,416.3 730.7,416.3 743.6,418.6 756.6,428.0 769.5,511.0 782.5,513.3 795.4,511.7 808.4,513.3 821.3,508.4 834.3,508.4 847.2,513.3 860.2,511.7 873.1,509.4 886.1,506.8 899.0,438.0 912.0,418.6 924.9,420.2 937.9,425.7 950.8,420.9 963.7,418.6 976.7,416.3 989.6,416.3 1002.6,416.3 1015.5,425.7 1028.5,506.2 1041.4,513.3 1054.4,509.1 1067.3,515.9 1080.3,511.0 1093.2,511.0 1106.2,511.0 1119.1,511.0 1132.1,508.8 1145.0,506.8 1158.0,446.8 1170.9,418.6 1183.9,418.6 1196.8,425.7 1209.8,423.1 1222.7,416.3 1235.7,416.3 1248.6,416.3 1261.6,418.6 1274.5,423.1 1287.4,501.3 1300.4,515.9 1313.3,511.0 1326.3,515.9 1339.2,511.0 1352.2,511.0 1365.1,511.0 1378.1,511.0 1391.0,511.0 1404.0,508.8 1416.9,448.4 1429.9,418.6 1442.8,420.9 1455.8,425.7 1468.7,420.9 1481.7,416.3 1494.6,416.3 1507.6,416.3 1520.5,416.3 1527.0,418.6" fill="none" stroke="#dd3350" stroke-width="0.95" stroke-linejoin="round"/><path d="M944.8 347.3l6.1 6.2l-6.1 6.2l-6.1 -6.2z" fill="#ffee00" stroke="#8a8a3a" stroke-width="0.8"/><text x="231.6" y="176.4" font-size="14.5" fill="#2367ab" text-anchor="end">4.0</text><text x="231.6" y="233.0" font-size="14.5" fill="#2367ab" text-anchor="end">3.0</text><text x="231.6" y="289.5" font-size="14.5" fill="#2367ab" text-anchor="end">2.0</text><text x="231.6" y="346.1" font-size="14.5" fill="#2367ab" text-anchor="end">1.0</text><text x="231.6" y="402.7" font-size="14.5" fill="#2367ab" text-anchor="end">0.0</text><text x="231.6" y="459.3" font-size="14.5" fill="#2367ab" text-anchor="end">-1.0</text><text x="231.6" y="515.9" font-size="14.5" fill="#2367ab" text-anchor="end">-2.0</text><text x="231.6" y="572.4" font-size="14.5" fill="#2367ab" text-anchor="end">-3.0</text><text x="231.6" y="629.0" font-size="14.5" fill="#2367ab" text-anchor="end">-4.0</text><rect x="193" y="107.7" width="40.6" height="16.6" rx="3" fill="#fff" stroke="#2a62a0" stroke-width="1"/><path d="M233.6 107.5l8.2 8.3l-8.2 8.3z" fill="#145a9c"/><text x="231.6" y="120.2" font-size="14.5" fill="#2367ab" text-anchor="end">5.0</text><text x="232.2" y="137.8" font-size="14.5" fill="#2367ab" text-anchor="end">V</text><rect x="209.7" y="681.4" width="43.4" height="20.3" rx="3" fill="#fff" stroke="#42699a" stroke-width="1.2"/><path d="M206 681.4h6" stroke="#42699a" stroke-width="1.1" fill="none"/><text x="231.4" y="685.8" font-size="14.5" fill="#2367ab" text-anchor="end">-5.0</text><path d="M225.5 681.6l7.4 -9l7.9 9z" fill="#145a9c"/><text x="1528.6" y="233.0" font-size="14.5" fill="#dc1c44">5.0</text><text x="1528.6" y="289.5" font-size="14.5" fill="#dc1c44">4.0</text><text x="1528.6" y="346.1" font-size="14.5" fill="#dc1c44">3.0</text><text x="1528.6" y="402.7" font-size="14.5" fill="#dc1c44">2.0</text><text x="1528.6" y="459.3" font-size="14.5" fill="#dc1c44">1.0</text><text x="1528.6" y="515.9" font-size="14.5" fill="#dc1c44">0.0</text><text x="1528.6" y="572.4" font-size="14.5" fill="#dc1c44">-1.0</text><text x="1528.6" y="629.0" font-size="14.5" fill="#dc1c44">-2.0</text><text x="1528.6" y="685.6" font-size="14.5" fill="#dc1c44">-3.0</text><text x="1528.2" y="216.4" font-size="14.5" fill="#dc1c44">V</text><rect x="1526.4" y="107.8" width="41" height="16.4" rx="2.5" fill="#fff" stroke="#c8324c" stroke-width="1.1"/><path d="M1526.6 107.4l-8.6 8.4l8.6 8.4z" fill="#ec0c34"/><circle cx="1488.6" cy="142.7" r="6.9" fill="#fff" stroke="#145a9c" stroke-width="3.4"/><path d="M1494.4 148.4l10.2 9.4" stroke="#145a9c" stroke-width="5.6" fill="none"/><path d="M1485 142.7h7.2M1488.6 139.1v7.2" stroke="#145a9c" stroke-width="1.8" fill="none"/><text x="296.0" y="698.7" font-size="14.5" fill="#222" text-anchor="middle">-100.0</text><text x="425.5" y="698.7" font-size="14.5" fill="#222" text-anchor="middle">-80.0</text><text x="555.0" y="698.7" font-size="14.5" fill="#222" text-anchor="middle">-60.0</text><text x="684.4" y="698.7" font-size="14.5" fill="#222" text-anchor="middle">-40.0</text><text x="813.9" y="698.7" font-size="14.5" fill="#222" text-anchor="middle">-20.0</text><text x="944.6" y="698.7" font-size="14.5" fill="#222" text-anchor="middle">0.0</text><text x="1074.1" y="698.7" font-size="14.5" fill="#222" text-anchor="middle">20.0</text><text x="1203.6" y="698.7" font-size="14.5" fill="#222" text-anchor="middle">40.0</text><text x="1333.0" y="698.7" font-size="14.5" fill="#222" text-anchor="middle">60.0</text><text x="1462.5" y="698.7" font-size="14.5" fill="#222" text-anchor="middle">80.0</text><text x="319.4" y="698.7" font-size="14.5" fill="#222">ns</text></svg>
<svg style="left:790.0px;top:708.0px;" width="180" height="30" viewBox="0 0 180 30"><path d="M7.4 3.6h164.2l-13.2 23.4h-137.8z" fill="#fff"/><path d="M7.4 3.9l13.2 23.1h137.8l13.2 -23.1" fill="none" stroke="#a3c3e3" stroke-width="1"/><path d="M146.3 11.5l7 7M153.3 11.5l-7 7" stroke="#145a9c" stroke-width="1.4" fill="none"/></svg>
<div class="t" style="left:832.2px;top:717.0px;font-size:14.2px;color:#2b5f9a;">Measurements</div>
<div style="left:193.3px;top:739.1px;width:429.4px;height:78px;background:#fff;border-radius:7px;overflow:hidden"><div style="right:0;top:0;width:30.2px;height:100%;background:#8fbcea"></div></div>
<svg style="left:193.3px;top:739.1px;" width="100" height="40" viewBox="0 0 100 40"><polyline points="21.0,19.7 21.6,18.5 22.2,17.3 22.9,16.1 23.5,15.0 24.1,14.0 24.7,13.1 25.3,12.4 26.0,11.7 26.6,11.2 27.2,10.9 27.8,10.7 28.4,10.6 29.0,10.7 29.7,11.0 30.3,11.4 30.9,11.9 31.5,12.6 32.1,13.4 32.8,14.4 33.4,15.4 34.0,16.5 34.6,17.7 35.2,18.9 35.9,20.1 36.5,21.4 37.1,22.6 37.7,23.8 38.3,25.0 39.0,26.0 39.6,27.1 40.2,28.0 40.8,28.7 41.4,29.4 42.0,29.9 42.7,30.3 43.3,30.5 43.9,30.6 44.5,30.5 45.1,30.3 45.8,29.9 46.4,29.3 47.0,28.7 47.6,27.9 48.2,27.0 48.9,26.0 49.5,24.9 50.1,23.7 50.7,22.5 51.3,21.2 52.0,20.0 52.6,18.8 53.2,17.5 53.8,16.4 54.4,15.3 55.0,14.3 55.7,13.4 56.3,12.5 56.9,11.9 57.5,11.3 58.1,10.9 58.8,10.7 59.4,10.6 60.0,10.7 60.6,10.9 61.2,11.3 61.9,11.8 62.5,12.4 63.1,13.2 63.7,14.1 64.3,15.1 64.9,16.2 65.6,17.4 66.2,18.6 66.8,19.8 67.4,21.1 68.0,22.3 68.7,23.5 69.3,24.7 69.9,25.8 70.5,26.8 71.1,27.7 71.8,28.6 72.4,29.3 73.0,29.8 73.6,30.2 74.2,30.5 74.9,30.6 75.5,30.5 76.1,30.3 76.7,30.0 77.3,29.5 77.9,28.8 78.6,28.1 79.2,27.2 79.8,26.2 80.4,25.1 81.0,24.0 81.7,22.8 82.3,21.5 82.9,20.3" fill="none" stroke="#9fb6d6" stroke-width="1.1"/><path d="M36.1 5.1v30.2M67.2 5.1v30.2" stroke="#e2607c" stroke-width="1.1" fill="none"/></svg>
<div class="t" style="left:220.7px;top:789.0px;font-size:10.5px;color:#2b5f9a;">Frequency</div>
<div class="t" style="left:284.7px;top:744.0px;font-size:13.4px;color:#2b5f9a;">A</div>
<div class="t" style="left:287.3px;top:782.0px;font-size:17px;color:#444;">28.09 MHz</div>
<div class="t" style="left:495.7px;top:742.0px;font-size:10.6px;color:#2b5f9a;">Min.</div>
<div class="t" style="left:523.6px;top:742.0px;font-size:10.6px;color:#2b5f9a;">28.09 MHz</div>
<div class="t" style="left:495.7px;top:758.0px;font-size:10.6px;color:#2b5f9a;">Max.</div>
<div class="t" style="left:523.6px;top:758.0px;font-size:10.6px;color:#2b5f9a;">28.09 MHz</div>
<div class="t" style="left:495.7px;top:774.0px;font-size:10.6px;color:#2b5f9a;">x&#772;</div>
<div class="t" style="left:523.6px;top:774.0px;font-size:10.6px;color:#2b5f9a;">28.09 MHz</div>
<div class="t" style="left:495.7px;top:789.0px;font-size:10.6px;color:#2b5f9a;">σ</div>
<div class="t" style="left:523.6px;top:789.0px;font-size:10.6px;color:#2b5f9a;">0 Hz</div>
<div class="t" style="left:495.7px;top:805.0px;font-size:10.6px;color:#2b5f9a;">n</div>
<div class="t" style="left:523.6px;top:805.0px;font-size:10.6px;color:#2b5f9a;">1</div>
<svg style="left:600.0px;top:768.5px;" width="15" height="20" viewBox="0 0 15 20"><path d="M4.4 2.6a3.2 2.6 0 0 1 6.2 0" fill="none" stroke="#fff" stroke-width="1.1"/><rect x="0" y="2.7" width="14.8" height="1.7" rx="0.5" fill="#fff"/><path d="M1.4 5.4h12l-1.3 14.1h-9.4z" fill="#fff"/><path d="M4.7 7.2l0.4 10.4M7.4 7.2v10.4M10.1 7.2l-0.4 10.4" stroke="#8fbcea" stroke-width="1" fill="none"/></svg>
<div style="left:634.8px;top:739.1px;width:429.4px;height:78px;background:#fff;border-radius:7px;overflow:hidden"><div style="right:0;top:0;width:30.2px;height:100%;background:#8fbcea"></div></div>
<svg style="left:634.8px;top:739.1px;" width="100" height="40" viewBox="0 0 100 40"><polyline points="21.0,19.7 21.6,18.5 22.2,17.3 22.9,16.1 23.5,15.0 24.1,14.0 24.7,13.1 25.3,12.4 26.0,11.7 26.6,11.2 27.2,10.9 27.8,10.7 28.4,10.6 29.0,10.7 29.7,11.0 30.3,11.4 30.9,11.9 31.5,12.6 32.1,13.4 32.8,14.4 33.4,15.4 34.0,16.5 34.6,17.7 35.2,18.9 35.9,20.1 36.5,21.4 37.1,22.6 37.7,23.8 38.3,25.0 39.0,26.0 39.6,27.1 40.2,28.0 40.8,28.7 41.4,29.4 42.0,29.9 42.7,30.3 43.3,30.5 43.9,30.6 44.5,30.5 45.1,30.3 45.8,29.9 46.4,29.3 47.0,28.7 47.6,27.9 48.2,27.0 48.9,26.0 49.5,24.9 50.1,23.7 50.7,22.5 51.3,21.2 52.0,20.0 52.6,18.8 53.2,17.5 53.8,16.4 54.4,15.3 55.0,14.3 55.7,13.4 56.3,12.5 56.9,11.9 57.5,11.3 58.1,10.9 58.8,10.7 59.4,10.6 60.0,10.7 60.6,10.9 61.2,11.3 61.9,11.8 62.5,12.4 63.1,13.2 63.7,14.1 64.3,15.1 64.9,16.2 65.6,17.4 66.2,18.6 66.8,19.8 67.4,21.1 68.0,22.3 68.7,23.5 69.3,24.7 69.9,25.8 70.5,26.8 71.1,27.7 71.8,28.6 72.4,29.3 73.0,29.8 73.6,30.2 74.2,30.5 74.9,30.6 75.5,30.5 76.1,30.3 76.7,30.0 77.3,29.5 77.9,28.8 78.6,28.1 79.2,27.2 79.8,26.2 80.4,25.1 81.0,24.0 81.7,22.8 82.3,21.5 82.9,20.3" fill="none" stroke="#9fb6d6" stroke-width="1.1"/><path d="M36.1 5.1v30.2M67.2 5.1v30.2" stroke="#e2607c" stroke-width="1.1" fill="none"/></svg>
<div class="t" style="left:662.2px;top:789.0px;font-size:10.5px;color:#2b5f9a;">Frequency</div>
<div class="t" style="left:726.2px;top:744.0px;font-size:13.4px;color:#d8142c;">B</div>
<div class="t" style="left:728.8px;top:782.0px;font-size:17px;color:#444;">25.00 MHz</div>
<div class="t" style="left:937.2px;top:742.0px;font-size:10.6px;color:#2b5f9a;">Min.</div>
<div class="t" style="left:965.1px;top:742.0px;font-size:10.6px;color:#2b5f9a;">25.00 MHz</div>
<div class="t" style="left:937.2px;top:758.0px;font-size:10.6px;color:#2b5f9a;">Max.</div>
<div class="t" style="left:965.1px;top:758.0px;font-size:10.6px;color:#2b5f9a;">25.00 MHz</div>
<div class="t" style="left:937.2px;top:774.0px;font-size:10.6px;color:#2b5f9a;">x&#772;</div>
<div class="t" style="left:965.1px;top:774.0px;font-size:10.6px;color:#2b5f9a;">25.00 MHz</div>
<div class="t" style="left:937.2px;top:789.0px;font-size:10.6px;color:#2b5f9a;">σ</div>
<div class="t" style="left:965.1px;top:789.0px;font-size:10.6px;color:#2b5f9a;">4.127 kHz</div>
<div class="t" style="left:937.2px;top:805.0px;font-size:10.6px;color:#2b5f9a;">n</div>
<div class="t" style="left:965.1px;top:805.0px;font-size:10.6px;color:#2b5f9a;">1</div>
<svg style="left:1041.5px;top:768.5px;" width="15" height="20" viewBox="0 0 15 20"><path d="M4.4 2.6a3.2 2.6 0 0 1 6.2 0" fill="none" stroke="#fff" stroke-width="1.1"/><rect x="0" y="2.7" width="14.8" height="1.7" rx="0.5" fill="#fff"/><path d="M1.4 5.4h12l-1.3 14.1h-9.4z" fill="#fff"/><path d="M4.7 7.2l0.4 10.4M7.4 7.2v10.4M10.1 7.2l-0.4 10.4" stroke="#8fbcea" stroke-width="1" fill="none"/></svg>
<div style="left:1429.3px;top:744.3px;width:128.6px;height:37.4px;background:#fff;border:1.2px solid #9fc0e3;border-radius:5px;overflow:hidden"><div style="left:43.3px;top:-2px;width:41.3px;height:40px;background:#145a9c"></div></div>
<div class="t" style="left:1451.1px;transform:translateX(-50%);top:751.0px;font-size:21px;color:#145a9c;-webkit-text-stroke:0.55px #145a9c;">s</div>
<div class="t" style="left:1494.2px;transform:translateX(-50%);top:754.0px;font-size:19.6px;color:#fff;font-weight:700;">M</div>
<div class="t" style="left:1536.4px;transform:translateX(-50%);top:750.0px;font-size:27px;color:#145a9c;-webkit-text-stroke:0.9px #145a9c;">L</div>
<div style="left:1433.4px;top:802.3px;width:120.6px;height:36px;background:#fff;border:1.2px solid #9fc0e3;border-radius:5px"></div>
<div class="t" style="left:1489.8px;top:809.0px;font-size:15.2px;color:#145a9c;-webkit-text-stroke:0.25px #145a9c;">Reset</div>
<svg style="left:1438.0px;top:805.0px;" width="24" height="22" viewBox="0 0 24 22"><path d="M4.9 9.2a8 8 0 1 1 1.4 7.2" fill="none" stroke="#145a9c" stroke-width="1.9"/><path d="M1.4 7.2l7.2 0.9l-4.9 5z" fill="#145a9c"/><path d="M12.6 6.6v5l3.4 2.3" fill="none" stroke="#145a9c" stroke-width="1.7"/></svg>
</body></html>
